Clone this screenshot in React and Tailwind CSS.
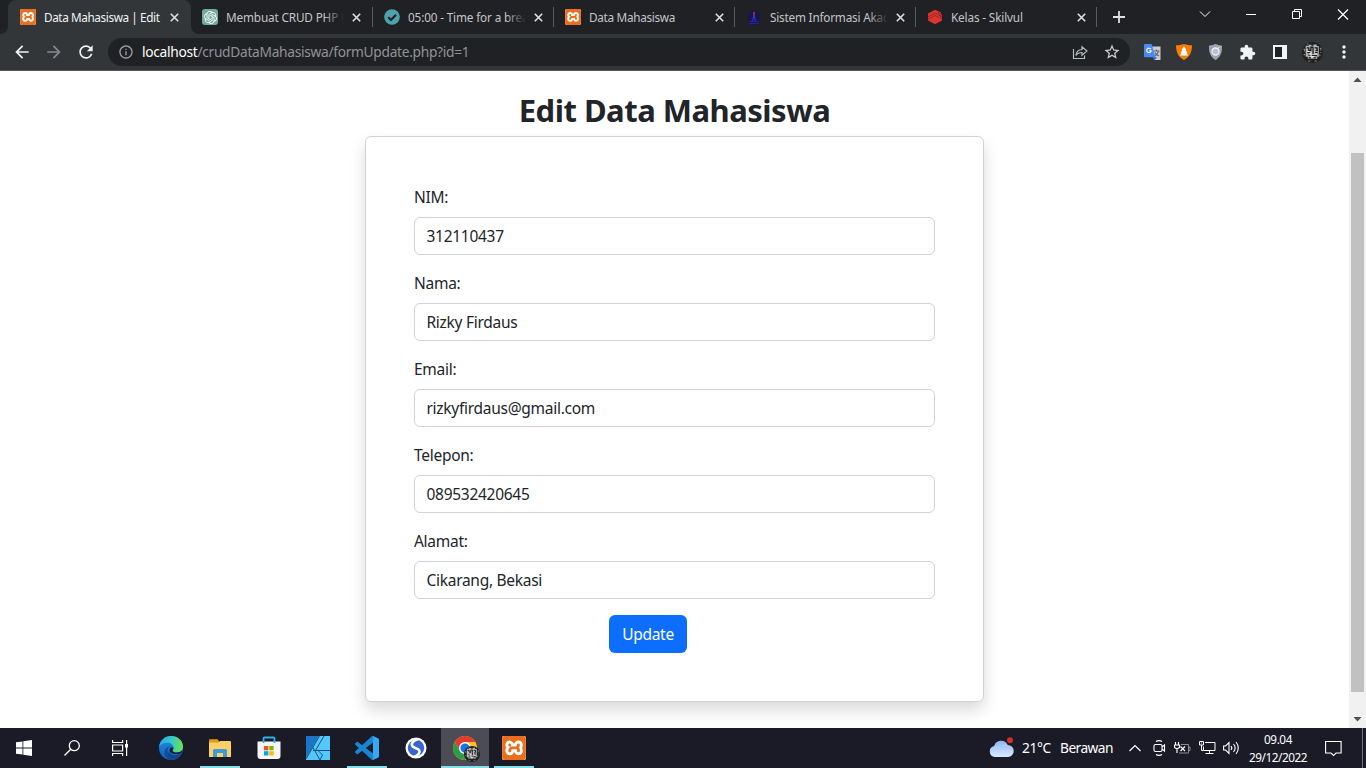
import React from "react";
import {
  MdArrowBack, MdArrowForward, MdRefresh, MdInfoOutline, MdStarBorder,
  MdMoreVert, MdExtension,
} from "react-icons/md";
import { SiOpenai, SiXampp } from "react-icons/si";

const Close = () => (
  <svg width="9" height="9" viewBox="0 0 9 9" stroke="#dfe1e5" strokeWidth="1.6">
    <path d="M.8.8l7.4 7.4M8.2.8L.8 8.2" />
  </svg>
);

function Xampp({ size }) {
  return (
    <span className="block overflow-hidden rounded-[2px] bg-white">
      <SiXampp size={size} color="#ec6e1c" />
    </span>
  );
}

const GptIcon = () => (
  <span className="flex size-4 items-center justify-center rounded-[3px] bg-[#74aa9c]">
    <SiOpenai size={13} color="#fff" />
  </span>
);

const CheckIcon = () => (
  <svg width="16" height="16" viewBox="0 0 16 16">
    <circle cx="8" cy="8" r="7.8" fill="#4ba3ab" />
    <path d="M4.2 8.2l2.8 2.8 5-5.3" fill="none" stroke="#202124" strokeWidth="2.2" />
  </svg>
);

const CampusIcon = () => (
  <svg width="16" height="16" viewBox="0 0 16 16">
    <path d="M2 10V7.500a6 6 0 0112 0V10l-1 2 .8 3.500H2.200L3 12z" fill="#17174e" />
    <path d="M3.500 12.500h9M3 14.500h10M6.500 9h3v3h-3z" stroke="#2323a0" fill="#20207a" />
    <path d="M8 5.500v4" stroke="#3a4fb8" strokeWidth="1.500" />
    <path d="M8 2.200c1.500 1.500 1.200 3.400 0 3.800-1.200-.5-1.200-2.100 0-3.800" fill="#c92a2a" />
  </svg>
);

const SkilvulIcon = () => (
  <svg width="16" height="16" viewBox="0 0 16 16">
    <path d="M8 .8l5.500 2.400L15 6.500v5L8 15.200 1 11.500v-7z" fill="#dc352f" />
    <path d="M1 7.800l7-3.800 3 1.500M1 10.200l7-3.800 7 3.400" fill="none" stroke="#84201f" strokeWidth=".7" />
    <path d="M11 3.500l4 2.200M11.500 6l3.500 1.800" stroke="#84201f" strokeWidth="1" />
  </svg>
);

const tabs = [
  { title: "Membuat CRUD PHP M", icon: <GptIcon />, pad: "pl-[11px]", fade: true, ls: "tracking-[-0.15px]" },
  { title: "05:00 - Time for a break", icon: <CheckIcon />, pad: "pl-[12px]", fade: true, ls: "tracking-[-0.15px]" },
  { title: "Data Mahasiswa", icon: <Xampp size={16} />, pad: "pl-[12px]", fade: false, ls: "tracking-[-0.3px]" },
  { title: "Sistem Informasi Akade", icon: <CampusIcon />, pad: "pl-[12px]", fade: true, ls: "tracking-[-0.2px]" },
  { title: "Kelas - Skilvul", icon: <SkilvulIcon />, pad: "pl-[12px]", fade: false, ls: "tracking-[-0.15px]" },
];

function Tab({ t }) {
  return (
    <div className={`flex h-[34px] w-[181px] shrink-0 items-center ${t.pad}`}>
      <span className="w-4 shrink-0">{t.icon}</span>
      <div className="relative ml-2 w-[118px] overflow-hidden whitespace-nowrap">
        <span className={`block text-[11.75px] leading-[18px] text-[#c3c6ca] ${t.ls}`}>{t.title}</span>
        {t.fade && <span className="absolute inset-y-0 right-0 w-5 bg-linear-to-r from-[#202124]/0 to-[#202124]" />}
      </div>
      <span className="ml-[8px]"><Close /></span>
      <span className="-mr-px ml-auto h-5 w-px bg-[#5b5c60]" />
    </div>
  );
}

function TabStrip() {
  return (
    <div className="flex h-[34px] bg-[#202124]">
      <div className="w-2 bg-[#323639]"><div className="h-full w-full rounded-br-lg bg-[#202124]" /></div>
      <div className="flex w-[183px] bg-[#202124]">
        <div className="flex w-full items-center rounded-t-lg bg-[#323639] pl-3">
          <Xampp size={16} />
          <span className="ml-2 w-[118px] whitespace-nowrap text-[11.75px] leading-[18px] tracking-[-0.4px] text-[#f1f3f4]">Data Mahasiswa | Edit</span>
          <span className="ml-[8px]"><Close /></span>
        </div>
      </div>
      <div className="flex bg-[#323639]">
        <div className="flex rounded-bl-lg bg-[#202124]">
          {tabs.map((t) => <Tab key={t.title} t={t} />)}
        </div>
      </div>
      <svg className="ml-[17px] mt-[11px]" width="12" height="12" stroke="#dfe1e5" strokeWidth="1.8"><path d="M6 0v12M0 6h12" /></svg>
      <svg className="ml-[74px] mt-[10px]" width="12" height="8" stroke="#fff" fill="none"><path d="M1 1.500l5 5 5-5" /></svg>
      <svg className="ml-[35px] mt-[14px]" width="10" height="1"><rect width="10" height="1" fill="#fff" /></svg>
      <svg className="ml-[36px] mt-[9px]" width="11" height="11" stroke="#fff" fill="none"><path d="M.5 2.500h7v7h-7zM2.500 2.500v-2h7v7h-2" /></svg>
      <svg className="ml-[34px] mt-[9px]" width="12" height="11" stroke="#fff" strokeWidth="1.200"><path d="M1 .5l10 10M11 .5l-10 10" /></svg>
    </div>
  );
}

const Translate = () => (
  <svg width="17" height="17" viewBox="0 0 17 17">
    <path d="M8 2.500h8.500V16H10z" fill="#c9ccd1" />
    <path d="M9.500 7h6M12.500 5.500V7M14.500 7c-.5 2.500-2 4-4 5M11 8.500c1 2 2.500 3 4 3.500" stroke="#5f6368" fill="none" strokeWidth="1.100" />
    <path d="M9 13l4 .2-2.600 3z" fill="#2f5fd0" />
    <path d="M1 0h6.600l3.900 13.200H1A1 1 0 010 12.200V1a1 1 0 011-1z" fill="#4a8af4" />
    <path d="M6.800 5.200a2.200 2.200 0 10.300 1.600H5.200" fill="none" stroke="#fff" strokeWidth="1.100" />
  </svg>
);

const OrangeShield = () => (
  <svg width="16" height="16" viewBox="0 0 16 16">
    <path d="M8 0c2.500 1 5 1.300 8 1.300 0 7-2.500 12-8 14.700C2.500 13.300 0 8.300 0 1.300 3 1.300 5.500 1 8 0z" fill="#ff7b00" />
    <path d="M8 2.300l2.600 4h-1l2 2.800h-1l1.600 2.400H3.800l1.600-2.400h-1l2-2.800h-1z" fill="#fff" />
  </svg>
);

const GreyShield = () => (
  <svg width="13" height="16" viewBox="0 0 13 16">
    <path d="M6.500.3C8.500 1.500 10.500 2 12.700 2c0 6.500-1.700 11-6.200 13.700C2 13 .3 8.500.3 2c2.200 0 4.200-.5 6.200-1.700z" fill="#9aa3b5" stroke="#c5cad6" strokeWidth=".6" />
    <circle cx="6.500" cy="7.500" r="3.500" fill="#b9c0ce" stroke="#eef0f5" strokeWidth="1.300" />
    <path d="M8.500 5l2-2.200" stroke="#eef0f5" />
  </svg>
);

function Face({ size }) {
  return (
    <svg width={size} height={size} viewBox="0 0 20 20">
      <circle cx="10" cy="10" r="10" fill="#1f1f1f" />
      <path d="M3.500 3.500h3V2.500h2.500v1h2V2.300h3v1.500h2V14h-1.500v2h-9v-2h-2z" fill="#b5b5b5" />
      <path d="M4.500 5.500h2v2.500h2V5h2v3.500M12 5.500h2.500V8H13M10.500 8.500v3M5 10h2.500M12.500 10H15M6 12.500h2M9.500 13h5M6.500 15h2M11 15h2" fill="none" stroke="#1c1c1c" strokeWidth="1.200" />
      <path d="M7 11.300h2M12 11.500h2M5 9h2M8 14h4" stroke="#fff" />
      <path d="M1.500 7h1v2M1.500 12h1.500M17 6h1v2M17 12v1.500M6 18h2M12 18h2M5 2h1M17.500 10h1" fill="none" stroke="#8c8c8c" />
    </svg>
  );
}

function Toolbar() {
  return (
    <div className="flex h-[37px] items-center border-b border-[#54565a] bg-[#323639]">
      <MdArrowBack className="ml-[12px]" size={20} color="#f1f3f4" />
      <MdArrowForward className="ml-[12px]" size={20} color="#85888c" />
      <MdRefresh className="ml-[12px]" size={20} color="#f1f3f4" />
      <div className="ml-[12px] flex h-[28px] w-[1022px] items-center rounded-full bg-[#202124] pl-[10px]">
        <MdInfoOutline size={16} color="#9aa0a6" />
        <span className="ml-2 pt-px text-[13.75px] tracking-[-0.3px] text-[#8f9398]"><span className="text-white">localhost</span>/crudDataMahasiswa/formUpdate.php?id=1</span>
        <svg className="ml-auto" width="16" height="16" viewBox="0 0 16 16" fill="none" stroke="#b8bbbf" strokeWidth="1.200">
          <path d="M1.500 5v9.500h11v-3M4 11.500c.3-3.800 2.500-5.800 6-6V2.700L15 7l-5 4.200V8.500c-2.600 0-4.600.8-6 3z" />
        </svg>
        <MdStarBorder className="ml-[15px] mr-[9px]" size={18} color="#d0d3d6" />
      </div>
      <span className="ml-[14px]"><Translate /></span>
      <span className="ml-[15px]"><OrangeShield /></span>
      <span className="ml-[17px]"><GreyShield /></span>
      <MdExtension className="ml-[17px]" size={17} color="#f1f3f4" />
      <svg className="ml-[17px]" width="14" height="14"><path d="M0 0h14v14H0z" fill="#f1f3f4" /><path d="M2 2h7v10H2z" fill="#202124" /></svg>
      <span className="ml-[15px]"><Face size={21} /></span>
      <MdMoreVert className="ml-[11px]" size={20} color="#f1f3f4" />
    </div>
  );
}

const fields = [
  ["NIM:", "312110437"],
  ["Nama:", "Rizky Firdaus"],
  ["Email:", "rizkyfirdaus@gmail.com"],
  ["Telepon:", "089532420645"],
  ["Alamat:", "Cikarang, Bekasi"],
];

function Page() {
  return (
    <div className="flex h-[657px] bg-white">
      <main className="flex w-[1349px] flex-col items-center pt-[20px] text-[15.5px] tracking-[-0.28px] text-[#212529]">
        <h1 className="mb-[8px] h-[37px] whitespace-nowrap text-[31px] font-bold leading-[38px] tracking-[-0.5px]">Edit Data Mahasiswa</h1>
        <form className="h-[566px] w-[619px] rounded-md border border-[#d0d2d4] bg-white p-[48px] shadow-[0_8px_16px_rgba(0,0,0,0.15)]">
          {fields.map(([label, value]) => (
            <div key={label} className="mb-4">
              <label className="mb-2 block h-6 leading-[25px]">{label}</label>
              <div className="flex h-[38px] items-center rounded-md border border-[#ced4da] px-[11.5px] pt-px">{value}</div>
            </div>
          ))}
          <button type="button" className="ml-[195px] h-[38px] w-[78px] rounded-md bg-[#0d6efd] pt-px text-white">Update</button>
        </form>
      </main>
      <div className="flex w-[17px] flex-col items-center bg-[#f1f1f1]">
        <svg width="17" height="17"><path d="M4.500 11h8l-4-4.500z" fill="#505050" /></svg>
        <div className="mt-[65px] h-[539px] w-[13px] bg-[#c1c1c1]" />
        <svg className="mt-auto" width="17" height="17"><path d="M4.500 6h8l-4 4.500z" fill="#505050" /></svg>
      </div>
    </div>
  );
}

const Edge = () => (
  <svg width="24" height="24" viewBox="0 0 24 24">
    <defs>
      <linearGradient id="eg1" x1="0" y1=".3" x2="1" y2=".4"><stop offset="0" stopColor="#28a8ea" /><stop offset=".5" stopColor="#35c6c9" /><stop offset="1" stopColor="#6be44f" /></linearGradient>
      <linearGradient id="eg2" x1="0" y1="0" x2="0" y2="1"><stop offset="0" stopColor="#1d94e0" /><stop offset="1" stopColor="#0f5cc0" /></linearGradient>
    </defs>
    <circle cx="12" cy="12" r="12" fill="url(#eg2)" />
    <path d="M.1 11A12 12 0 0112 0c7 0 12 5 12 10.500 0 4-3 6-6.200 6-2.600 0-4.300-1-4.300-1.900 0-.7 1-1.100 1-3C14.500 9 12 6.800 8.800 6.800 4.500 6.800 1.200 8.500.1 11z" fill="url(#eg1)" />
    <path d="M10.500 10.200c-3 2-3.500 9 4.500 10.300 3 .4 5.300-.6 7-1.800A12 12 0 0112.500 24C8 23.500 5.500 20 5.700 16c.2-3 2.200-5.200 4.800-5.800z" fill="#124a94" />
    <path d="M14.500 11.800c0 1.800-1 2.200-1 2.900 0 .9 1.700 1.900 4.300 1.900 2.500 0 4.700-1 5.700-2.800-.2 1-.5 2-1 2.900-3 1.900-10.500 2.100-12-2 0-2.200 1.500-4.500 4-2.900z" fill="#1b1b28" />
    <path d="M10.200 14.500c0 5 7 6.500 12.300 2.200-.4 1.200-1 2-1.500 2.600-2.500 2.500-5 3-8 2-3-1.200-4.500-4.300-2.800-6.800z" fill="#0e4589" />
  </svg>
);
const Folder = () => (
  <svg width="22" height="19" viewBox="0 0 22 19">
    <path d="M0 1.200A1 1 0 011 .2h7.500l1.500 2V8H0z" fill="#e79a0c" />
    <path d="M0 3.500h9.500l1.500-1.500h10a1 1 0 011 1v15H0z" fill="#fbd068" />
    <path d="M4 18v-6.500A1.500 1.500 0 015.500 10h11a1.500 1.500 0 011.500 1.500V18h-4v-4H8v4z" fill="#3f98dc" />
  </svg>
);
const Store = () => (
  <svg width="24" height="24" viewBox="0 0 24 24">
    <path d="M6.500 7V2.500a1 1 0 011-1h9a1 1 0 011 1V7" fill="none" stroke="#2bb1ea" strokeWidth="1.800" />
    <path d="M.5 5.500h23V20a3 3 0 01-3 3h-17a3 3 0 01-3-3z" fill="#f5f5f5" />
    <path d="M6.500 5v2M17.500 5v2" stroke="#2bb1ea" strokeWidth="1.800" />
    <path d="M7 10h4.400v4.300H7z" fill="#f25022" /><path d="M12.300 10h4.400v4.300h-4.400z" fill="#7fba00" />
    <path d="M7 15.200h4.400v4.300H7z" fill="#00a4ef" /><path d="M12.300 15.200h4.400v4.300h-4.400z" fill="#ffb900" />
  </svg>
);
const Affinity = () => (
  <svg width="24" height="24" viewBox="0 0 24 24">
    <path d="M0 0h24v24H0z" fill="#54c8fb" />
    <path d="M0 0h13L0 22z" fill="#1b74c5" />
    <path d="M13.500 0L0 23M7 11.500L14 24M14 24l2.500-5-4.500-4.500M7 14.500h17M18 0L9.500 14.500" fill="none" stroke="#174f7c" strokeWidth="1" />
  </svg>
);
const Code = () => (
  <svg width="24" height="24" viewBox="0 0 24 24">
    <path fill="#1687d0" d="M23.150 2.587L18.210.210a1.494 1.494 0 0 0-1.705.290l-9.460 8.630-4.120-3.128a.999.999 0 0 0-1.276.057L.327 7.261A1 1 0 0 0 .326 8.740L3.899 12 .326 15.260a1 1 0 0 0 .001 1.479L1.650 17.940a.999.999 0 0 0 1.276.057l4.120-3.128 9.460 8.630a1.492 1.492 0 0 0 1.704.290l4.942-2.377A1.500 1.500 0 0 0 24 20.060V3.939a1.500 1.500 0 0 0-.850-1.352zm-5.146 14.861L10.826 12l7.178-5.448v10.896z" />
    <path fill="#35a9f2" d="M18 .1l5.150 2.487A1.500 1.500 0 0124 3.940V20.060a1.500 1.500 0 01-.850 1.352L18 23.900z" />
  </svg>
);
const Simplenote = () => (
  <svg width="22" height="22" viewBox="0 0 22 22">
    <circle cx="11" cy="11" r="10.500" fill="#fff" />
    <circle cx="11" cy="11" r="8.200" fill="#3765d4" />
    <path d="M13.500 2C7 3.500 5.500 7.500 8 9.800c2 1.700 5 1.200 6.300 3.600 1.200 2.400-1.300 5.400-5.800 6.600" fill="none" stroke="#fff" strokeWidth="2.600" />
  </svg>
);
const Chrome = () => (
  <span className="relative">
    <svg width="24" height="24" viewBox="0 0 24 24">
      <circle cx="12" cy="12" r="12" fill="#fbc116" />
      <path d="M1.600 6A12 12 0 0122.400 6H12v6l-5.200 3z" fill="#e33b2e" />
      <path d="M1.600 6l5.200 9 5.200 3-3 5.600A12 12 0 011.600 6z" fill="#2a9d4c" />
      <path d="M12 24l5.200-9L12 18 9 23.600z" fill="#2a9d4c" />
      <circle cx="12" cy="12" r="6" fill="#fff" /><circle cx="12" cy="12" r="4.600" fill="#1a73e8" />
    </svg>
    <span className="absolute left-[11px] top-[10px]"><Face size={16} /></span>
  </span>
);

const apps = [
  { icon: <Edge />, box: "", bar: "w-0" },
  { icon: <Folder />, box: "", bar: "w-10" },
  { icon: <Store />, box: "", bar: "w-0" },
  { icon: <Affinity />, box: "", bar: "w-0" },
  { icon: <Code />, box: "", bar: "w-10" },
  { icon: <Simplenote />, box: "", bar: "w-0" },
  { icon: <Chrome />, box: "bg-[#4b4c56]", bar: "w-12" },
  { icon: <Xampp size={24} />, box: "", bar: "w-10" },
];

function Taskbar() {
  return (
    <div className="flex h-[40px] bg-[#1b1b28] text-white">
      <div className="flex w-12 items-center justify-center">
        <svg width="16" height="16" fill="#fff"><path d="M0 2.300l6.500-.9v6.200H0zM7.300 1.300L16 0v7.600H7.300zM0 8.400h6.500v6.200L0 13.700zM7.300 8.400H16V16l-8.700-1.300z" /></svg>
      </div>
      <div className="flex w-12 items-center justify-center">
        <svg width="16" height="16" fill="none" stroke="#fff" strokeWidth="1.300"><circle cx="10.300" cy="5.700" r="5" /><path d="M6.700 9.300L.5 15.500" /></svg>
      </div>
      <div className="flex w-[51px] items-center pl-[16px]">
        <svg width="17" height="16" fill="none" stroke="#fff" strokeWidth="1.200"><path d="M.6 0v2.500h10V0M.6 16v-2.500h10V16M.6 5h10v6H.6zM14.600 0v16" /><path d="M13 4h3v3.500h-3z" fill="#fff" stroke="none" /></svg>
      </div>
      <div className="flex gap-px">
        {apps.map((a, i) => (
          <div key={i} className={`flex w-12 flex-col items-center ${a.box}`}>
            <div className="flex h-[38px] items-center pt-[2px]">{a.icon}</div>
            <div className={`h-[2px] bg-[#86dfe8] ${a.bar}`} />
          </div>
        ))}
      </div>
      <div className="ml-auto flex w-[377px] items-center">
        <svg width="26" height="22" viewBox="0 0 26 22">
          <defs><linearGradient id="cl" x1="0" y1="0" x2="0" y2="1"><stop offset="0" stopColor="#8bb6f5" /><stop offset="1" stopColor="#dce9fb" /></linearGradient></defs>
          <path d="M6 20a5.500 5.500 0 01-.7-10.900A7 7 0 0118.500 8 6 6 0 0119 20z" fill="url(#cl)" />
          <path d="M5.300 9.100c3 0 4.700 1.400 5.700 2.900M13 9.500C15 8 17 7.700 18.500 8" fill="none" stroke="#b9d3fa" />
          <circle cx="21" cy="3.200" r="3" fill="#d32f20" />
        </svg>
        <span className="ml-[7px] w-[38px] whitespace-nowrap pt-px text-[13.75px] tracking-[-0.35px]">21°C</span>
        <span className="w-[69px] whitespace-nowrap pt-px text-[13.75px] tracking-[-0.55px]">Berawan</span>
        <svg width="12" height="8" fill="none" stroke="#fff" strokeWidth="1.200"><path d="M.5 7L6 1.500 11.500 7" /></svg>
        <svg className="ml-[12px]" width="13" height="16" fill="none" stroke="#fff" strokeWidth="1.100"><path d="M3 1.500C4.500.3 7.500.3 9 1.500M3 14.500c1.500 1.200 4.500 1.200 6 0M2.500 4.500h5A1.500 1.500 0 019 6v4a1.500 1.500 0 01-1.500 1.500h-5A1.500 1.500 0 011 10V6a1.500 1.500 0 011.500-1.500zM9 7l2.500-2v6L9 9" /></svg>
        <svg className="ml-[8px]" width="17" height="14" fill="none" stroke="#fff"><path d="M1.500 1v3M4.500 1v3M.5 4h5v2.500L3 8 .5 6.500zM3 8v4M6.500 5.500L11 10M11 5.500L6.500 10" strokeWidth="1.150" /><path d="M7 3.500h7.500v8.500H5M15 6h1v3.500h-1" stroke="#8d8d96" /></svg>
        <svg className="ml-[8px]" width="17" height="14" fill="none" stroke="#fff"><path d="M6 1.500h10v8H4.500V5.500M10.500 9.500V13M6.500 12.500h8M.5.500h4V4h-4zM2.500 1.500v1M2.500 4v5.500h2" /></svg>
        <svg className="ml-[7px]" width="17" height="14" fill="none" stroke="#fff" strokeWidth="1.100"><path d="M.6 5h2L6 1.500v11L2.600 9h-2zM8 5c1 1.200 1 2.800 0 4M10.500 3c2 2.400 2 5.600 0 8M13 1c3 3.500 3 8.500 0 12" /></svg>
        <div className="ml-[7px] flex w-[62px] flex-col items-center whitespace-nowrap text-[11.75px] leading-[18px] tracking-[-0.43px]"><span>09.04</span><span>29/12/2022</span></div>
        <svg className="ml-[16px]" width="17" height="17" fill="none" stroke="#fff" strokeWidth="1.100"><path d="M.6 1.500h15.500v11.500h-5L8.500 15.500 6 13H.6z" /></svg>
        <div className="ml-auto mr-[3px] h-full w-px bg-[#70707a]" />
      </div>
    </div>
  );
}

export default function App() {
  return (
    <div className="h-[768px] w-[1366px] overflow-hidden font-['Noto_Sans','Open_Sans',sans-serif]">
      <TabStrip />
      <Toolbar />
      <Page />
      <Taskbar />
    </div>
  );
}
